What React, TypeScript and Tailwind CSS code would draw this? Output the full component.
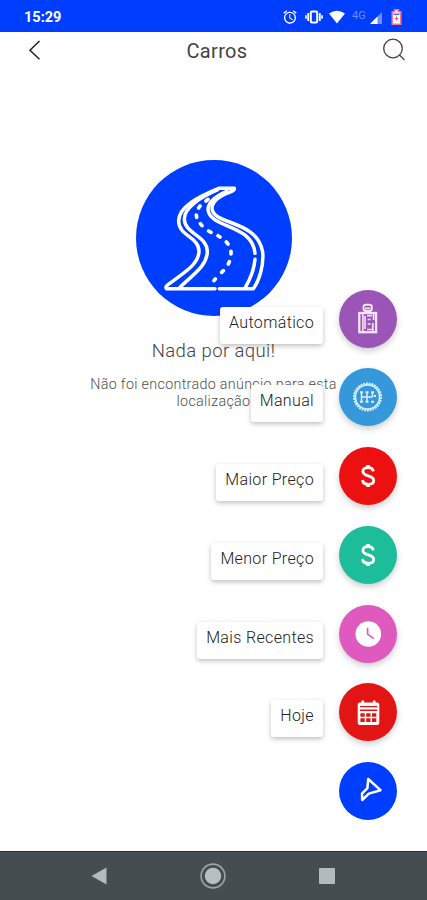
import { useState, type ReactNode } from "react";
import { MdAlarm } from "react-icons/md";

type Filtro = {
  label: string;
  cor: string;
  icone: ReactNode;
};

const RoadIcon = () => (
  <svg viewBox="18 16 468 468" className="w-[156px] h-[156px]" fill="none" stroke="white" strokeWidth="10.5" strokeLinecap="round" strokeLinejoin="round">
    <path d="M255 402H109C106 397 108 394 114 390C160 355 206 330 207 290C207 246 145 244 146 198C147 156 205 126 266 101H313C314 106 309 109 300 112C270 123 246 140 246 162C250 212 380 194 398 292C402 335 386 380 370 402H268" />
    <path d="M150 398C186 362 232 334 232 290C231 242 163 238 163 192C163 158 215 126 262 106" />
    <path d="M290 110C256 125 234 141 234 165C240 222 366 206 375 296" />
    <path d="M375 314C372 346 360 374 346 398" />
    <path d="M234 134L228 139M210 154L206 160M199 181L200 188M211 207L216 213M236 229L243 233M264 243L270 247M289 262L294 268M303 290V298M298 321L295 328M280 348L275 353M256 373L252 378" strokeWidth="11" />
  </svg>
);

const GearShiftIcon = () => (
  <svg viewBox="0 0 58 58" className="w-[58px] h-[58px]" fill="none" stroke="#f3e4f7">
    <rect x="24.5" y="14.8" width="8.4" height="6.2" rx="2.4" strokeWidth="1.9" />
    <path d="M26 18.4h5.4M26.5 20.5v3M31 20.5v3" strokeWidth="1.7" />
    <rect x="20.3" y="23" width="16.8" height="19.2" strokeWidth="2.3" />
    <path d="M23.9 24v17M26 26v13" strokeWidth="1.6" />
    <path d="M28 25.6h5M28.6 29.5h3M28.6 34h3M28 39.5h6M34.6 24v6M33.8 33v8" strokeWidth="1.7" />
  </svg>
);

const ManualIcon = () => (
  <svg viewBox="0 0 58 58" className="w-[58px] h-[58px]" fill="none" stroke="#d9effb">
    <circle cx="28.5" cy="29" r="13.5" strokeWidth="2" strokeDasharray="2 .8" />
    <circle cx="28.5" cy="29" r="12.1" strokeWidth="1.6" />
    <path d="M22.5 25v8M28 25v8M33.5 25v4M22.5 29h11" strokeWidth="1.5" />
    <path d="M21 24.2h3M26.5 24.2h3M32 24.2h3M21 33.8h3M26.5 33.8h3M32 33.8h3M36 27v2" strokeWidth="2" />
  </svg>
);

const MoneyIcon = () => (
  <svg viewBox="0 0 58 58" className="w-[58px] h-[58px]" fill="none" stroke="white" strokeWidth="2.8">
    <path d="M34.3 24.4C34 21.8 32 20.7 29.1 20.7C26 20.7 23.9 22.2 23.9 24.5C23.9 27 26 27.9 29.2 28.8C32.6 29.7 34.7 30.9 34.7 33.5C34.7 36 32.5 37.3 29.3 37.3C25.9 37.3 23.8 35.8 23.5 33" />
    <path d="M29.1 18V21M29.1 37V40" strokeWidth="3.6" />
  </svg>
);

const ClockIcon = () => (
  <svg viewBox="0 0 58 58" className="w-[58px] h-[58px]" fill="none">
    <circle cx="29.3" cy="29" r="12.8" fill="white" />
    <path d="M28.6 22.8v6.4l6.2 4.4" stroke="#de5abf" strokeWidth="1.6" />
  </svg>
);

const CalendarIcon = () => (
  <svg viewBox="0 0 58 58" className="w-[58px] h-[58px]" fill="none">
    <path d="M22.5 17.5h2.6v2h8.8v-2h2.6v2h1.6a2.2 2.2 0 0 1 2.2 2.2v18a2.2 2.2 0 0 1-2.2 2.2h-17.2a2.2 2.2 0 0 1-2.2-2.2v-18a2.2 2.2 0 0 1 2.2-2.2h1.6z" fill="white" />
    <path d="M21 23.6h17.2M21 27.2h17.2" stroke="#e31414" strokeWidth="1.4" />
    <path d="M21.4 30.2h4.3v3.6h-4.3zM27.2 30.2h4.3v3.6h-4.3zM33 30.2h4.3v3.6h-4.3zM21.4 35.3h4.3v3.6h-4.3zM27.2 35.3h4.3v3.6h-4.3zM33 35.3h4.3v3.6h-4.3z" fill="#e31414" />
  </svg>
);

const FilterIcon = () => (
  <svg viewBox="0 0 58 58" className="w-[58px] h-[58px]" fill="none" stroke="white" strokeWidth="2.5" strokeLinejoin="round">
    <path d="M29.2 17L41.5 28.2L29.8 31.6L23.2 38L23 31.6L28.4 26.2Z" />
  </svg>
);

const filtros: Filtro[] = [
  { label: "Automático", cor: "bg-[#9b55b7]", icone: <GearShiftIcon /> },
  { label: "Manual", cor: "bg-[#3498db]", icone: <ManualIcon /> },
  { label: "Maior Preço", cor: "bg-[#ec1010]", icone: <MoneyIcon /> },
  { label: "Menor Preço", cor: "bg-[#1dbc9b]", icone: <MoneyIcon /> },
  { label: "Mais Recentes", cor: "bg-[#de5abf]", icone: <ClockIcon /> },
  { label: "Hoje", cor: "bg-[#e31414]", icone: <CalendarIcon /> },
];

function StatusBar() {
  return (
    <div className="flex h-8 items-center justify-between bg-[#003eff] pl-6 pr-[25px] pt-[2px] text-white">
      <span className="pt-px text-[14.5px] font-bold">15:29</span>
      <div className="flex items-center">
        <MdAlarm size={16} />
        <svg viewBox="0 0 18 14" className="ml-[7px] h-[14px] w-[18px]" fill="none" stroke="white">
          <rect x="5.8" y="1.5" width="6.4" height="11" rx="1" strokeWidth="2" />
          <path d="M3.2 3v8M14.8 3v8" strokeWidth="1.8" />
          <path d="M1 5.2v3.6M17 5.2v3.6" strokeWidth="1.6" />
        </svg>
        <svg viewBox="0 0 18 14" className="ml-[5px] h-[14px] w-[18px]" fill="white">
          <path d="M1 3.5Q9-2 17 3.5L9 13.5Z" />
        </svg>
        <span className="ml-[6px] h-[17px] w-[15px] text-[11px] leading-[13px] text-[#6b8fff]">4G</span>
        <svg viewBox="0 0 12 12" className="ml-[3px] mt-[1px] h-3 w-3">
          <path d="M0 12L12 0V12Z" fill="#6b8fff" />
          <path d="M0 12L7.5 4.5V12Z" fill="white" />
        </svg>
        <svg viewBox="0 0 11 16" className="ml-[9px] h-4 w-[11px]">
          <path d="M3.5.8h4v2h2.3v12.4H1.2V2.8h2.3Z" fill="#fff" stroke="#f8718a" strokeWidth="1.5" />
          <path d="M2.5 5.3h6" stroke="#4f6df5" strokeWidth="1.6" />
          <path d="M5.5 7.5v4M3.8 9.5h3.4" stroke="#ef5670" strokeWidth="1.2" />
        </svg>
      </div>
    </div>
  );
}

function Header() {
  return (
    <header className="flex h-9 items-center justify-between pl-7 pr-[21px]">
      <svg viewBox="0 0 14 20" className="h-5 w-[14px]" fill="none" stroke="#222" strokeWidth="1.5">
        <path d="M11.5 1L2 10.2L11.5 19.2" />
      </svg>
      <h1 className="ml-[10px] mt-[2px] text-[20px] tracking-[0.35px] text-[#444]">Carros</h1>
      <svg viewBox="0 0 24 24" className="h-6 w-6" fill="none" stroke="#444" strokeWidth="1.3">
        <circle cx="11" cy="10.5" r="9.3" />
        <path d="M17.5 17L22.5 22" />
      </svg>
    </header>
  );
}

function NavBar() {
  return (
    <nav className="flex h-[49px] items-center justify-between border-t border-[#1d3536] bg-[#464d51] pl-[91px] pr-[92px] pb-px">
      <svg viewBox="0 0 16 18" className="h-[18px] w-4" fill="#b4bbbc">
        <path d="M.5 9L15.5.5V17.5Z" />
      </svg>
      <svg viewBox="0 0 26 26" className="h-[26px] w-[26px]">
        <circle cx="13" cy="13" r="11.9" fill="none" stroke="#9da5a6" strokeWidth="1.6" />
        <circle cx="13" cy="13" r="8.2" fill="#b9bfc0" />
      </svg>
      <div className="h-4 w-4 rounded-[1px] bg-[#b4bbbc]" />
    </nav>
  );
}

export default function App() {
  const [aberto, setAberto] = useState(true);

  return (
    <div className="relative flex h-[900px] w-[427px] flex-col overflow-hidden bg-white font-[Roboto,sans-serif]">
      <StatusBar />
      <Header />

      <main className="flex flex-1 flex-col items-center pt-[92px]">
        <div className="rounded-full bg-[#003eff]">
          <RoadIcon />
        </div>
        <h2 className="mt-[23px] text-[18.5px] leading-6 tracking-[0.4px] font-light text-[#444]">Nada por aqui!</h2>
        <p className="mt-[13px] w-[270px] text-center text-[14.3px] leading-[17px] tracking-[0.32px] font-light text-[#505050]">
          Não foi encontrado anúncio para esta localização
        </p>
      </main>

      <div className="absolute right-[30px] bottom-[80px] flex flex-col items-end gap-[20.75px]">
        {aberto &&
          filtros.map((filtro) => (
            <button key={filtro.label} className="flex h-[58px] items-center gap-4">
              <span className="mt-[13px] h-[37px] rounded-[3px] bg-white px-[9px] pt-[5px] text-[16px] leading-[22px] tracking-[0.35px] font-light text-[#222] shadow-[0_2px_5px_rgba(0,0,0,0.25)]">
                {filtro.label}
              </span>
              <span className={`flex h-[58px] w-[58px] items-center justify-center rounded-full shadow-[0_3px_6px_rgba(0,0,0,0.2)] ${filtro.cor}`}>
                {filtro.icone}
              </span>
            </button>
          ))}
        <button
          onClick={() => setAberto(!aberto)}
          className="flex h-[58px] w-[58px] items-center justify-center rounded-full bg-[#003eff]"
        >
          <FilterIcon />
        </button>
      </div>

      <NavBar />
    </div>
  );
}
